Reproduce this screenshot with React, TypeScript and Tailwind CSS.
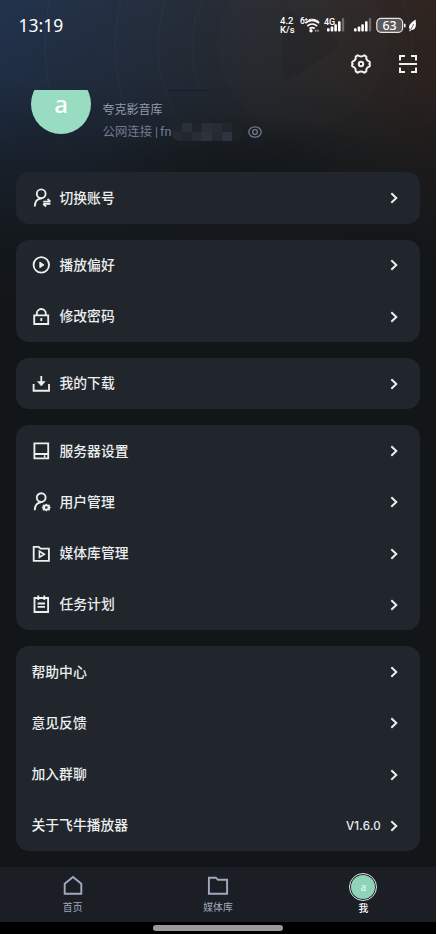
import type { ReactNode } from 'react';

type IconName = 'switch' | 'play' | 'lock' | 'download' | 'server' | 'user' | 'media' | 'task';

const icons: Record<IconName, ReactNode> = {
  switch: (
    <>
      <circle cx="9.2" cy="5.800" r="4.400" />
      <path d="M2.800 18.500c0-4.700 2.500-7.700 6.800-8.100" />
      <path d="M11.200 13.600h7.200M15.500 11l2.900 2.600M18.400 15.900h-7.200M14.100 18.500l-2.900-2.600" strokeWidth="1.900" />
    </>
  ),
  play: (
    <>
      <circle cx="9.300" cy="9.900" r="7.700" />
      <path d="M7.800 7.100v5.600l4.200-2.800z" fill="currentColor" strokeWidth="0.900" />
    </>
  ),
  lock: <path d="M2.200 8.300h14v8.700h-14zM4.800 8V6.500a4.500 4.500 0 0 1 9 0V8M9.300 11v3" />,
  download: (
    <>
      <path d="M1.600 10v6.700h15.400V10M9.300 2v8" />
      <path d="M5.400 7.500h7.800l-3.900 4.500z" fill="currentColor" strokeWidth="0.500" />
    </>
  ),
  server: <path d="M2.400 2.300h13.800v15.100H2.400zM2.400 13h13.800M11.800 15.200h1.600" />,
  user: (
    <>
      <circle cx="9.200" cy="5.600" r="4.400" />
      <path d="M2.800 18.300c0-4.600 2.300-7.400 6-7.900" />
      <path d="M14.300 11.800l1.300 1.300 1.900-.2.200 2 .9.600-.9 1-.2 1.700-1.900-.2-1.300 1.200-1.300-1.200-1.900.2-.2-1.700-.9-1 .9-.8.200-1.800 1.900.2z" strokeWidth="0.600" fill="currentColor" />
      <circle cx="14.300" cy="15.500" r="1.300" fill="#20262c" stroke="none" />
    </>
  ),
  media: (
    <>
      <path d="M1.700 2.800h5.100l1.600 1.800h8.500v12.200H1.700z" />
      <path d="M7.400 7.300v6l4.900-3z" strokeWidth="1.600" />
    </>
  ),
  task: <path d="M2.500 3h13.600v14H2.500zM6.300 .4v4.700M12.300 .4v4.700M5.600 8.500h7.400M5.600 11.900h7.400" />,
};

function MenuIcon({ name }: { name: IconName }) {
  return (
    <svg width="20" height="20" viewBox="0 0 20 20" fill="none" stroke="currentColor" strokeWidth="1.850" className="mr-2 shrink-0">
      {icons[name]}
    </svg>
  );
}

interface Item {
  label: string;
  icon?: IconName;
  value?: string;
}

const groups: Item[][] = [
  [{ label: '切换账号', icon: 'switch' }],
  [
    { label: '播放偏好', icon: 'play' },
    { label: '修改密码', icon: 'lock' },
  ],
  [{ label: '我的下载', icon: 'download' }],
  [
    { label: '服务器设置', icon: 'server' },
    { label: '用户管理', icon: 'user' },
    { label: '媒体库管理', icon: 'media' },
    { label: '任务计划', icon: 'task' },
  ],
  [{ label: '帮助中心' }, { label: '意见反馈' }, { label: '加入群聊' }, { label: '关于飞牛播放器', value: 'V1.6.0' }],
];

function Row({ label, icon, value }: Item) {
  return (
    <div className="flex h-[51.25px] items-center pr-[22px] pl-[15.500px] text-[13.800px] font-medium text-[#eceeef]">
      {icon && <MenuIcon name={icon} />}
      <span className="flex-1 whitespace-nowrap">{label}</span>
      {value && <span className="mr-[9px] pt-px font-['Inter'] text-[11.500px] tracking-[0.25px]">{value}</span>}
      <svg width="8" height="12" viewBox="0 0 8 12" fill="none" stroke="currentColor" strokeWidth="2">
        <path d="M1.300 1.200L6.300 6l-5 4.800" />
      </svg>
    </div>
  );
}

function Signal() {
  return (
    <svg width="18" height="14" viewBox="0 0 18 14" fill="#fff">
      <rect x="0" y="10.300" width="2.600" height="3.200" rx=".8" />
      <rect x="3.700" y="8.600" width="2.600" height="4.900" rx=".8" />
      <rect x="7.300" y="6.200" width="2.600" height="7.300" rx=".8" />
      <rect x="11" y="3.200" width="2.600" height="10.300" rx=".8" />
      <rect x="14.800" y="0" width="2.400" height="13.500" rx=".8" opacity=".3" />
    </svg>
  );
}

function StatusBar() {
  return (
    <div className="flex h-[50px] items-center pl-[18.500px] text-white">
      <span className="w-[261.500px] pt-[2px] font-['Noto_Sans'] text-[17.500px] leading-none">13:19</span>
      <div className="w-[20px] font-['Roboto'] text-[9.500px] leading-[9px] font-medium">
        <div>4.2</div>
        <div>K/s</div>
      </div>
      <svg width="21" height="16" viewBox="0 0 21 16" fill="none" stroke="#fff" className="overflow-visible">
        <text x="0" y="7" fontSize="8.500" fontWeight="600" fontFamily="Roboto" fill="#fff" stroke="none">6</text>
        <path d="M6.200 1v3M4.700 2.500h3" strokeWidth=".9" />
        <path d="M5.300 6.200c4-3.900 9.800-3.900 13.800 0M7.300 9.200c2.900-2.700 6.900-2.700 9.800 0" strokeWidth="1.700" />
        <path d="M8.700 2.700c3.400-1.100 7.200-.4 10.400 2" strokeWidth="1" />
        <path d="M9.500 11.700c1.600-1.300 3.700-1.300 5.300 0" strokeWidth="1.500" />
        <circle cx="11" cy="13.800" r="1.700" fill="#fff" stroke="none" />
        <path d="M16.300 12.300v3l-1.800-1.500zM17.500 12.300v3l1.800-1.500z" fill="#aaa" stroke="none" />
      </svg>
      <div className="relative ml-[6px] flex w-[27px] justify-start">
        <span className="absolute top-0 left-[-3px] font-['Roboto'] text-[9px] leading-none font-medium">4G</span>
        <Signal />
      </div>
      <div className="w-[22px]">
        <Signal />
      </div>
      <svg width="42" height="17" viewBox="0 0 42 17" fill="none">
        <rect x=".8" y="1.400" width="25.800" height="14" rx="4.200" fill="#5b5959" stroke="#e5e5e5" strokeWidth="1.200" />
        <text x="13.600" y="12.900" textAnchor="middle" fontSize="12.500" fontWeight="500" fontFamily="Noto Sans" fill="#fff">63</text>
        <path d="M28.800 6.700v3.500" stroke="#fff" strokeWidth="1.500" />
        <path d="M39.500 2.500c1 5.500.7 10.400-4.100 10.600L33.800 14.600l-.5-.8.500-1.400C31.200 8.500 36 5 39.500 2.500z" fill="#fff" />
        <path d="M34.500 13l3.200-6" stroke="#49403a" strokeWidth=".8" />
      </svg>
    </div>
  );
}

function Backdrop() {
  return (
    <svg className="pointer-events-none absolute inset-0" width="436" height="310" viewBox="0 0 436 310" fill="none">
      <defs>
        <linearGradient id="base" x1="0" x2="1">
          <stop offset="0" stopColor="#22334d" />
          <stop offset=".3" stopColor="#242f40" />
          <stop offset=".52" stopColor="#272c34" />
          <stop offset=".75" stopColor="#2d2a2a" />
          <stop offset="1" stopColor="#30241f" />
        </linearGradient>
        <linearGradient id="fade" x1="0" y1="0" x2="0" y2="1">
          <stop offset="0" stopColor="#121619" stopOpacity="0" />
          <stop offset=".25" stopColor="#121619" stopOpacity=".18" />
          <stop offset=".5" stopColor="#121619" stopOpacity=".62" />
          <stop offset=".8" stopColor="#121619" stopOpacity=".95" />
          <stop offset="1" stopColor="#121619" />
        </linearGradient>
        <radialGradient id="dim">
          <stop offset="0" stopColor="#121619" stopOpacity=".85" />
          <stop offset="1" stopColor="#121619" stopOpacity="0" />
        </radialGradient>
      </defs>
      <rect width="436" height="310" fill="url(#base)" />
      <circle cx="302" cy="46" r="85" fill="#fff" fillOpacity=".012" />
      <path d="M282 18q0-10 10-6l41 25q9 6 0 14l-41 28q-10 4-10-7z" fill="#000" fillOpacity=".07" />
      <g stroke="#fff" strokeOpacity=".035">
        <circle cx="302" cy="46" r="110" />
        <circle cx="302" cy="46" r="144" />
        <circle cx="302" cy="46" r="187" />
        <circle cx="302" cy="46" r="257" />
      </g>
      <rect width="436" height="310" fill="url(#fade)" />
      <ellipse cx="250" cy="175" rx="170" ry="60" fill="url(#dim)" />
      <path d="M168 90.500h40" stroke="#11213a" strokeWidth="1.500" />
    </svg>
  );
}

function Mosaic() {
  const cells = ['#1f252d', '#2a2f38', '#20252d', '#292e37', '#272c35', '#21262d', '#1d2126', '#252a33', '#22272f', '#292e36', '#2e323b', '#252a32', '#2f333d', '#1d2126'];
  return (
    <div className="grid h-[18px] w-[70px] grid-cols-7 overflow-hidden rounded-lg">
      {cells.map((c, i) => (
        <span key={i} style={{ backgroundColor: c }} />
      ))}
    </div>
  );
}

function Header() {
  return (
    <>
      <div className="flex h-10 items-start justify-end gap-[25px] pt-[3px] pr-[17px] text-[#f2f0ed]">
        <svg width="22" height="22" viewBox="0 0 22 22" fill="none" stroke="currentColor" strokeWidth="2" strokeLinejoin="round">
          <path d="M7.600 2.300Q11 4.800 14.400 2.300L16.300 3.600Q15.800 7.300 19.300 8.400Q20.600 9.500 19.300 11Q20.600 12.500 19.300 13.600Q15.800 14.700 16.300 18.400L14.400 19.700Q11 17.200 7.600 19.700L5.700 18.400Q6.200 14.700 2.700 13.600Q1.400 12.500 2.700 11Q1.400 9.500 2.700 8.400Q6.200 7.300 5.700 3.600Z" />
          <circle cx="11" cy="11" r="2.200" />
        </svg>
        <svg width="22" height="22" viewBox="0 0 22 22" fill="none" stroke="currentColor" strokeWidth="2">
          <path d="M3 7.500V3h5M14 3h5v4.500M19 14.500V19h-5M8 19H3v-4.500M2 11h18" />
        </svg>
      </div>
      <div className="flex h-[82.400px] items-start pl-[31px]">
        <div className="h-[44px] w-[60px] overflow-hidden">
          <div className="-mt-4 flex size-[60px] items-center justify-center rounded-full bg-[#98dcc2] font-['Noto_Sans'] text-[24px] leading-[28px] font-medium text-white">a</div>
        </div>
        <div className="ml-[11.500px] pt-[10.500px] text-[12px] leading-[18px] text-[#929bb0]">
          <div>夸克影音库</div>
          <div className="mt-[4px] flex h-[18px] items-center text-[12.400px] whitespace-nowrap text-[#727b8e]">
            <span className="flex w-[69px]">
              <span className="w-[52.500px]">公网连接</span>
              <span className="w-[5px] font-['Roboto']">|</span>
              <span className="font-['Roboto'] text-[12.600px]">fn</span>
            </span>
            <Mosaic />
            <svg width="14" height="12" viewBox="0 0 14 12" fill="none" stroke="#727b8e" strokeWidth="1.300" className="ml-[6.500px]">
              <ellipse cx="7" cy="6" rx="6.200" ry="5.200" />
              <circle cx="7" cy="6" r="2.400" />
            </svg>
          </div>
        </div>
      </div>
    </>
  );
}

function TabBar() {
  return (
    <nav className="mt-[15.600px] grid h-[55px] grid-cols-3 bg-[#1b1e24] text-[9.800px] leading-[13px] text-[#a0aabf]">
      <div className="flex flex-col items-center pt-[8.500px]">
        <svg width="22" height="22" viewBox="0 0 22 22" fill="none" stroke="currentColor" strokeWidth="1.900">
          <path d="M2.700 8.700L11 2l8.300 6.700v10H2.700z" />
        </svg>
        <span className="mt-[4px]">首页</span>
      </div>
      <div className="flex flex-col items-center pt-[8.500px]">
        <svg width="22" height="22" viewBox="0 0 22 22" fill="none" stroke="currentColor" strokeWidth="1.900">
          <path d="M1.900 2.700h7l2 2.100h9.200v13.900H1.900z" />
        </svg>
        <span className="mt-[4px]">媒体库</span>
      </div>
      <div className="flex flex-col items-center pt-[6.500px] text-white">
        <div className="flex size-[28px] items-center justify-center rounded-full border-[1.500px] border-[#e1e7e4]">
          <div className="flex size-[24px] items-center justify-center rounded-full bg-[#8fd4b9] font-['Noto_Sans'] text-[10px] font-medium text-[#e8f6f0]">a</div>
        </div>
        <span className="mt-px font-medium">我</span>
      </div>
    </nav>
  );
}

export default function App() {
  return (
    <div className="h-[934px] w-[437px] overflow-hidden bg-white">
      <div className="relative flex h-full w-[436px] flex-col bg-[#121619] font-['Noto_Sans','Noto_Sans_CJK_SC',sans-serif]">
        <Backdrop />
        <div className="relative">
          <StatusBar />
          <Header />
          <main className="flex flex-col gap-4 px-4">
            {groups.map((g, i) => (
              <section key={i} className="rounded-[13px] bg-[#20262c]">
                {g.map((item) => (
                  <Row key={item.label} {...item} />
                ))}
              </section>
            ))}
          </main>
          <TabBar />
          <div className="flex h-3 justify-center bg-black pt-[3px]">
            <div className="h-[6px] w-[130px] rounded-full bg-[#9a9a9a]" />
          </div>
        </div>
      </div>
    </div>
  );
}
